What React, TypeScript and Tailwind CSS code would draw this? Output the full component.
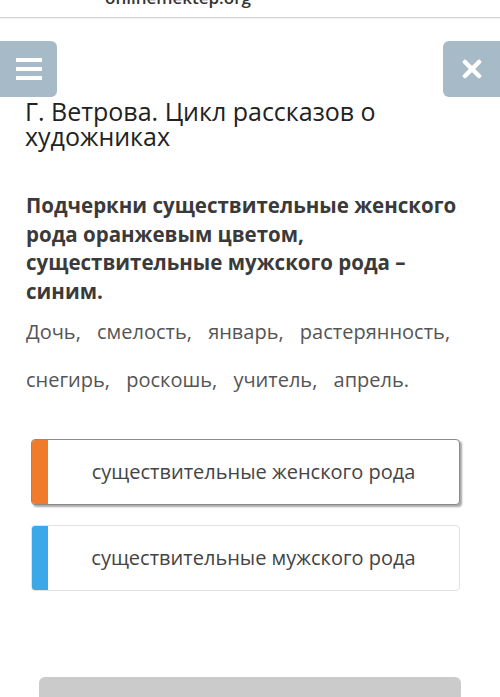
const font = { fontFamily: '"Open Sans", "Noto Sans", sans-serif' };

const Option = ({ label, bar, active }: { label: string; bar: string; active?: boolean }) => (
  <div
    className={`flex h-[66px] overflow-hidden rounded-[4px] bg-white ${
      active
        ? 'border border-[#8a8a8a] shadow-[2px_2px_2px_rgba(0,0,0,0.35)]'
        : 'border border-[#e2e2e2]'
    }`}
  >
    <div className={`w-[16px] shrink-0 ${bar}`} />
    <div className="flex flex-1 items-center justify-center text-[20px] text-[#444]">{label}</div>
  </div>
);

export default function App() {
  return (
    <div className="min-h-[697px] w-[500px] overflow-hidden bg-white" style={font}>
      <div className="h-[18px] overflow-hidden border-b border-[#d4d4d4] shadow-[0_1px_1px_rgba(0,0,0,0.05)]">
        <div className="-mt-[11px] pl-[105px] text-[17px] font-semibold leading-[18px] text-[#333]">
          onlinemektep.org
        </div>
      </div>

      <div className="mt-[23px] flex h-[56px] justify-between">
        <button className="flex w-[57px] flex-col items-center justify-center gap-[5px] rounded-r-[6px] bg-[#a7bac8]">
          <span className="block h-[4px] w-[26px] bg-white" />
          <span className="block h-[4px] w-[26px] bg-white" />
          <span className="block h-[4px] w-[26px] bg-white" />
        </button>
        <button className="flex w-[57px] items-center justify-center rounded-l-[6px] bg-[#a7bac8]">
          <svg width="20" height="20" viewBox="0 0 20 20">
            <path d="M3 3 L17 17 M17 3 L3 17" stroke="white" strokeWidth="4.5" strokeLinecap="round" />
          </svg>
        </button>
      </div>

      <h1 className="mt-[2px] px-[25px] text-[25px] leading-[25px] text-[#222]">
        Г. Ветрова. Цикл рассказов о художниках
      </h1>

      <p className="mt-[42px] px-[26px] text-[20.5px] font-bold leading-[28.5px] text-[#3a3a3a]">
        Подчеркни существительные женского рода оранжевым цветом, существительные мужского рода – синим.
      </p>

      <p className="mt-[3px] px-[26px] text-[20px] leading-[48px] text-[#555] [word-spacing:11px]">
        Дочь, смелость, январь, растерянность, снегирь, роскошь, учитель, апрель.
      </p>

      <div className="mt-[35px] flex flex-col gap-[20px] pl-[31px] pr-[40px]">
        <Option label="существительные женского рода" bar="bg-[#f07b2a]" active />
        <Option label="существительные мужского рода" bar="bg-[#3ba8ea]" />
      </div>

      <div className="mx-[39px] mt-[86px] h-[30px] rounded-t-[6px] bg-[#cbcbcb]" />
    </div>
  );
}
